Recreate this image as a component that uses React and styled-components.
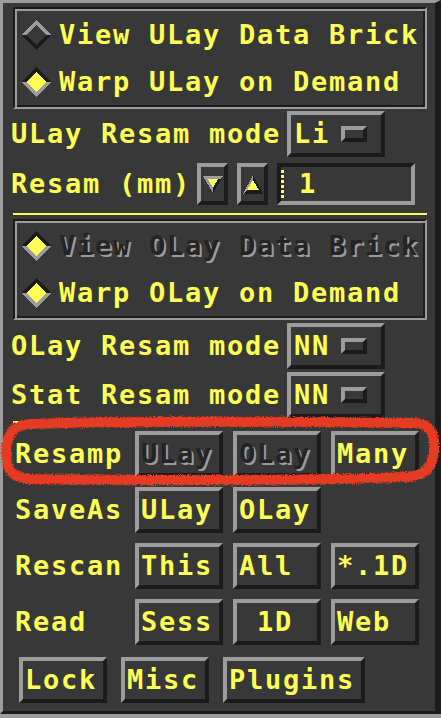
import React from 'react';
import styled, { createGlobalStyle, css } from 'styled-components';

const C = {
  bg: '#383838',
  light: '#9c9c9c',
  dark: '#1b1b1b',
  yellow: '#ffff55',
  red: '#e53a22',
};

const Global = createGlobalStyle`
  html, body { margin: 0; padding: 0; background: ${C.light}; }
  body { width: 441px; height: 718px; overflow: hidden; }
`;

const Panel = styled.div`
  position: relative;
  box-sizing: border-box;
  width: 441px;
  height: 714px;
  background: ${C.bg};
  border-style: solid;
  border-width: 3px 6px 3px 3px;
  border-color: ${C.light} ${C.dark} ${C.dark} ${C.light};
  padding: 4px 7px 0 8px;
  display: flex;
  flex-direction: column;
  font-family: "DejaVu Sans Mono", "Liberation Mono", monospace;
  font-weight: bold;
  font-size: 27px;
  letter-spacing: 1.75px;
  line-height: 30px;
  color: ${C.yellow};
  white-space: pre;
`;

const insensitive = css`
  color: #242424;
  text-shadow: 2px 2px 0 ${C.light};
`;

const Text = styled.span`
  display: block;
  flex: none;
  ${(p) => p.$w && `width: ${p.$w}px;`}
  ${(p) => p.$off && insensitive}
`;

const Frame = styled.div`
  margin: ${(p) => p.$mt}px 1px 0 2px;
  border: 2px solid;
  border-color: ${C.dark} ${C.light} ${C.light} ${C.dark};
  box-shadow: inset 2px 2px 0 ${C.light}, inset -2px -2px 0 ${C.dark};
  padding: 2px 0 2px 6px;
  display: flex;
  flex-direction: column;
`;

const RadioRow = styled.div`
  height: ${(p) => p.$h}px;
  display: flex;
  align-items: center;
`;

const DiamondSvg = styled.svg`
  flex: none;
  margin-right: 8px;
`;

const Row = styled.div`
  margin-top: ${(p) => p.$mt}px;
  height: ${(p) => p.$h}px;
  display: flex;
  align-items: center;
`;

const raised = css`
  box-sizing: border-box;
  border: 4px solid;
  border-color: ${C.light} ${C.dark} ${C.dark} ${C.light};
`;

const OptionButton = styled.div`
  ${raised}
  flex: none;
  width: 98px;
  height: 46px;
  margin-left: 6px;
  padding-left: 3px;
  display: flex;
  align-items: center;
`;

const Indicator = styled.div`
  ${raised}
  flex: none;
  width: 26px;
  height: 16px;
  margin-left: 11px;
`;

const ArrowButton = styled.div`
  ${raised}
  flex: none;
  width: 31px;
  height: 42px;
  margin-left: ${(p) => p.$ml}px;
  display: flex;
  align-items: center;
  justify-content: center;
`;

const TextField = styled.div`
  box-sizing: border-box;
  flex: none;
  width: 138px;
  height: 42px;
  margin-left: 9px;
  border: 4px solid;
  border-color: ${C.dark} ${C.light} ${C.light} ${C.dark};
  display: flex;
  align-items: center;
`;

const Cursor = styled.div`
  flex: none;
  width: 3px;
  height: 30px;
  margin-top: 2px;
  background: repeating-linear-gradient(
    to bottom,
    ${C.yellow} 0 3px,
    transparent 3px 5px
  );
  margin-right: 15px;
`;

const Separator = styled.div`
  height: 2px;
  margin: ${(p) => p.$mt}px 1px 0 2px;
  background: ${C.yellow};
`;

const ButtonSection = styled.div`
  margin: 8px 0 0 4px;
  display: flex;
  flex-direction: column;
  gap: 10px;
`;

const ButtonRow = styled.div`
  display: flex;
  align-items: center;
  gap: 10px;
  margin-left: ${(p) => p.$ml || 0}px;
  margin-top: ${(p) => p.$mt || 0}px;
`;

const Button = styled.div`
  ${raised}
  flex: none;
  min-width: 88px;
  height: 46px;
  padding: 0 6px 0 2px;
  display: flex;
  align-items: center;
  justify-content: ${(p) => (p.$center ? 'center' : 'flex-start')};
  ${(p) => p.$off && insensitive}
`;

const Annotation = styled.svg`
  position: absolute;
  left: -3px;
  top: -3px;
  pointer-events: none;
`;

function Diamond({ on }) {
  const top = on ? C.dark : C.light;
  const bottom = on ? C.light : C.dark;
  const fill = on ? C.yellow : C.bg;
  return (
    <DiamondSvg width="30" height="30" viewBox="0 0 30 30" shapeRendering="crispEdges">
      <polygon points="0,15 15,0 30,15 25,15 15,5 5,15" fill={top} />
      <polygon points="0,15 15,30 30,15 25,15 15,25 5,15" fill={bottom} />
      <polygon points="5,15 15,5 25,15 15,25" fill={fill} />
    </DiamondSvg>
  );
}

function Radio({ on, off, h, children }) {
  return (
    <RadioRow $h={h}>
      <Diamond on={on} />
      <Text $off={off}>{children}</Text>
    </RadioRow>
  );
}

function ArrowDown() {
  return (
    <svg width="20" height="17" viewBox="0 0 20 17" shapeRendering="crispEdges">
      <polygon points="0,0 20,0 10,17" fill={C.dark} />
      <polygon points="0,0 20,0 17,3 5,3 10,12 10,17" fill={C.light} />
      <polygon points="5,3 15,3 10,12" fill={C.yellow} />
    </svg>
  );
}

function ArrowUp() {
  return (
    <svg width="20" height="19" viewBox="0 0 20 19" shapeRendering="crispEdges">
      <polygon points="10,0 20,19 0,19" fill={C.dark} />
      <polygon points="10,0 10,5 4,15 0,19" fill={C.light} />
      <polygon points="10,5 16,15 4,15" fill={C.yellow} />
    </svg>
  );
}

function Option({ value }) {
  return (
    <OptionButton>
      <Text>{value}</Text>
      <Indicator />
    </OptionButton>
  );
}

export default function App() {
  return (
    <>
      <Global />
      <Panel>
        <Frame $mt={0}>
          <Radio h={47}>View ULay Data Brick</Radio>
          <Radio h={47} on>Warp ULay on Demand</Radio>
        </Frame>

        <Row $mt={2} $h={46}>
          <Text>ULay Resam mode</Text>
          <Option value="Li" />
        </Row>

        <Row $mt={6} $h={42}>
          <Text>Resam (mm)</Text>
          <ArrowButton $ml={6}><ArrowDown /></ArrowButton>
          <ArrowButton $ml={9}><ArrowUp /></ArrowButton>
          <TextField>
            <Cursor />
            <Text>1</Text>
          </TextField>
        </Row>

        <Separator $mt={8} />

        <Frame $mt={4}>
          <Radio h={46} on off>View OLay Data Brick</Radio>
          <Radio h={47} on>Warp OLay on Demand</Radio>
        </Frame>

        <Row $mt={3} $h={46}>
          <Text>OLay Resam mode</Text>
          <Option value="NN" />
        </Row>
        <Row $mt={3} $h={46}>
          <Text>Stat Resam mode</Text>
          <Option value="NN" />
        </Row>

        <Separator $mt={3} />

        <ButtonSection>
          <ButtonRow>
            <Text $w={110}>Resamp</Text>
            <Button $off>ULay</Button>
            <Button $off>OLay</Button>
            <Button>Many</Button>
          </ButtonRow>
          <ButtonRow>
            <Text $w={110}>SaveAs</Text>
            <Button>ULay</Button>
            <Button>OLay</Button>
          </ButtonRow>
          <ButtonRow>
            <Text $w={110}>Rescan</Text>
            <Button>This</Button>
            <Button>All</Button>
            <Button>*.1D</Button>
          </ButtonRow>
          <ButtonRow>
            <Text $w={110}>Read</Text>
            <Button>Sess</Button>
            <Button $center>1D</Button>
            <Button>Web</Button>
          </ButtonRow>
        </ButtonSection>

        <ButtonRow $ml={8} $mt={12} style={{ gap: 14 }}>
          <Button>Lock</Button>
          <Button>Misc</Button>
          <Button>Plugins</Button>
        </ButtonRow>

        <Annotation width="441" height="714" viewBox="0 0 441 714">
          <defs>
            <filter id="rough" x="-5%" y="-20%" width="110%" height="140%">
              <feTurbulence type="fractalNoise" baseFrequency="0.9" numOctaves="2" seed="3" result="n" />
              <feDisplacementMap in="SourceGraphic" in2="n" scale="5" xChannelSelector="R" yChannelSelector="G" />
            </filter>
          </defs>
          <path
            d="M 30 424 C 150 420, 300 422, 415 423 C 432 424, 435 435, 434 450 C 433 468, 425 476, 405 477 C 300 481, 120 480, 30 479 C 12 478, 6 470, 6 452 C 6 434, 14 425, 30 424 Z"
            fill="none"
            stroke={C.red}
            strokeWidth="10"
            filter="url(#rough)"
          />
        </Annotation>
      </Panel>
    </>
  );
}
